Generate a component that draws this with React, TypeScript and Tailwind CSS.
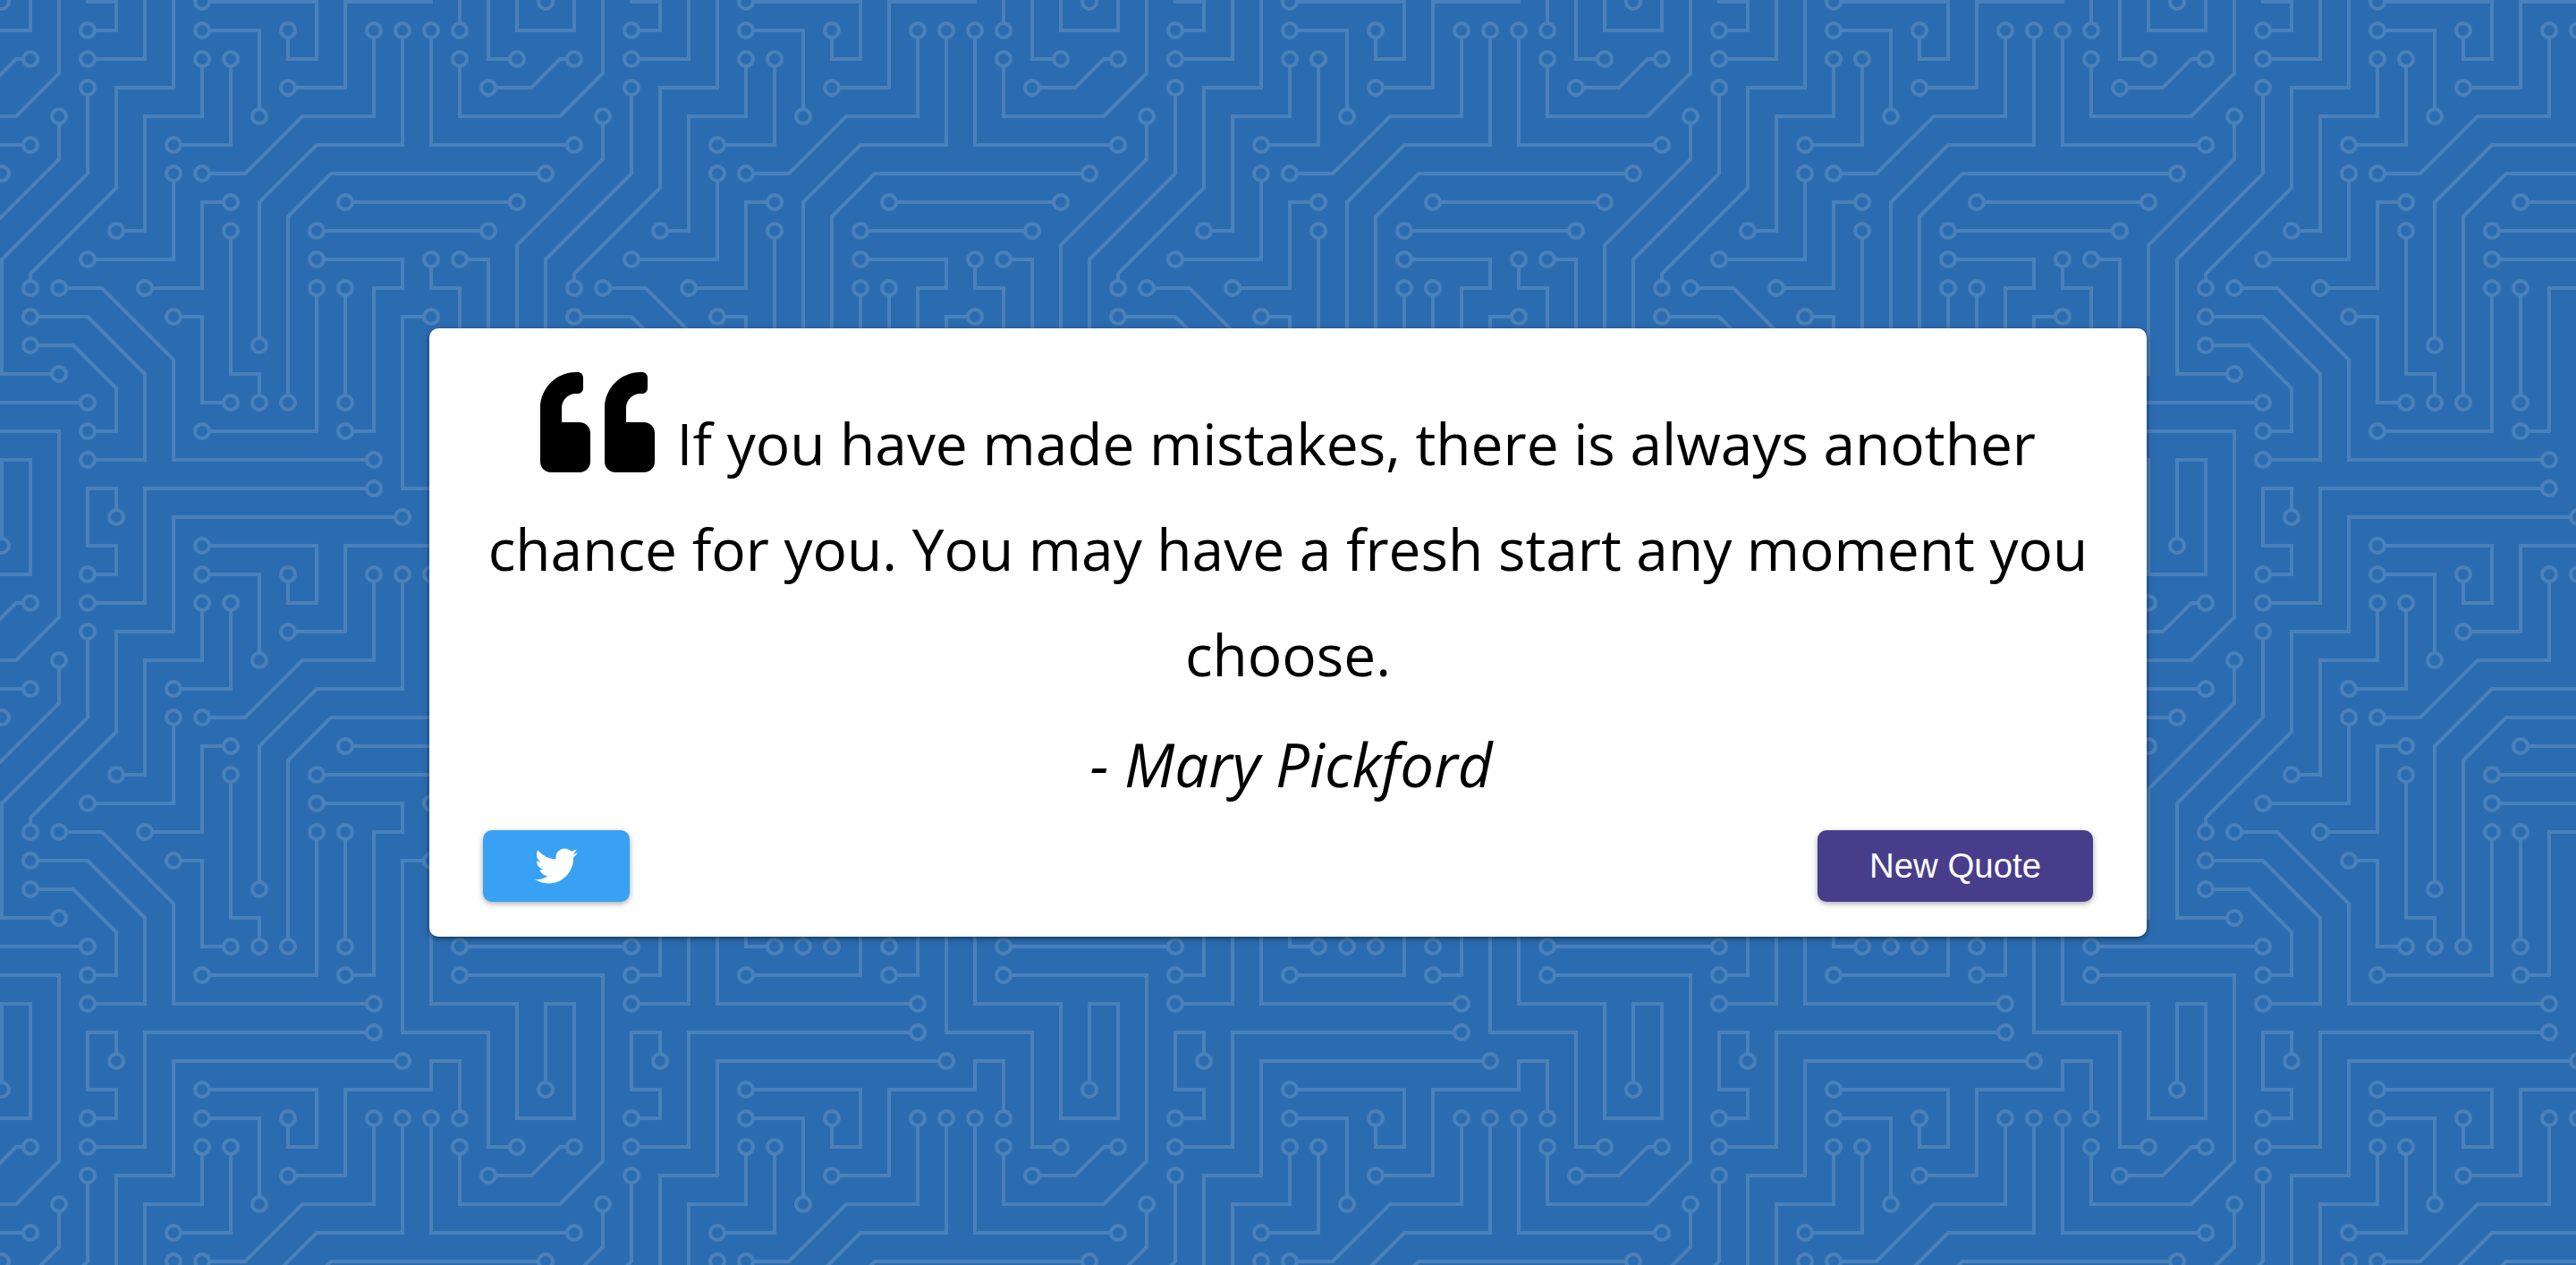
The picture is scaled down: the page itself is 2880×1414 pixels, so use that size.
import { FaQuoteLeft, FaTwitter } from "react-icons/fa";

// circuit board background, traced on a 32px grid (tile = 19 cells)
const CELL = 32;
const TILE = 608;
const LINE = "#4a81ba";
const BG = "#2b6cb0";

type Pt = [number, number];

const traces: { pts: Pt[]; open?: boolean }[] = [
  { pts: [[16, 15], [21, 15], [21, 21.5], [19.5, 23], [16, 23], [16, 21]] },
  { pts: [[15, 11], [14, 11], [14, 17], [17, 17], [17, 21], [18, 21]] },
  { pts: [[19, 19], [19, 16], [20, 16], [20, 20], [18, 20], [18, 16], [15, 16], [15, 13], [18, 13], [18, 8.5], [21, 5.5], [21, 4]] },
  { pts: [[16, 20], [16, 18], [15, 18], [15, 19], [12, 19], [12, 22], [10, 22]] },
  { pts: [[7, 19], [11, 19], [11, 21], [10, 21], [10, 20]] },
  { pts: [[14, 18], [6, 18], [6, 22], [4, 22], [4, 25.5], [1, 28.5], [1, 29]] },
  { pts: [[7, 6], [8.5, 6], [10.5, 4], [13, 4], [13, 1]] },
  { pts: [[14, 1], [14, 5], [11, 5], [9, 7], [9, 12]] },
  { pts: [[15, 1], [15, 5], [20, 5]] },
  { pts: [[17, 3], [18.5, 3], [19.5, 2], [20, 2]] },
  { pts: [[19, 6], [11.5, 6], [10, 7.5], [10, 14]] },
  { pts: [[12, 7], [18, 7]] },
  { pts: [[11, 8], [17, 8]] },
  { pts: [[11, 9], [14, 9], [14, 10], [13, 10], [13, 15], [12, 15]] },
  { pts: [[15, 9], [15, 10], [16, 10], [16, 12]], open: true },
  { pts: [[16, 9], [17, 9], [17, 12]], open: true },
  { pts: [[2, 13], [0, 13], [0, 9], [3, 6], [3, 3]] },
  { pts: [[4, 18], [4, 17], [3, 17], [3, 19], [4, 19], [4, 20], [3, 20]] },
  { pts: [[3, 21], [5, 21], [5, 17], [13, 17]] },
  { pts: [[7, 1], [9, 1], [9, 4]] },
  { pts: [[7, 2], [7, 4], [5, 4], [5, 8], [4, 8]] },
  { pts: [[8, 2], [8, 5], [6, 5]] },
  { pts: [[6, 6], [6, 9], [3, 9]] },
  { pts: [[8, 7], [7, 7], [7, 10], [5, 10]] },
  { pts: [[8, 8], [8, 13], [9, 13], [9, 14]] },
  { pts: [[2, 10], [3.5, 10], [6, 12.5], [6, 16], [13, 16]] },
  { pts: [[1, 11], [3, 11], [5, 13], [5, 16], [3, 16]] },
  { pts: [[1, 12], [2.5, 12], [4, 13.5], [4, 15], [3, 15]] },
  { pts: [[16, 14], [22, 14]] },
  { pts: [[7, 15], [11, 15], [11, 10]] },
  { pts: [[12, 10], [12, 14]] },
  { pts: [[6, 11], [7, 11], [7, 14], [8, 14]] },
];

const px = (n: number) => 2 + CELL * n;

function CircuitTile() {
  return (
    <>
      {traces.map((t, i) => (
        <g key={i}>
          <polyline
            points={t.pts.map(([x, y]) => `${px(x)},${px(y)}`).join(" ")}
            fill="none"
            stroke={LINE}
            strokeWidth={4}
          />
          <circle cx={px(t.pts[0][0])} cy={px(t.pts[0][1])} r={8} fill={BG} stroke={LINE} strokeWidth={4} />
          {!t.open && (
            <circle
              cx={px(t.pts[t.pts.length - 1][0])}
              cy={px(t.pts[t.pts.length - 1][1])}
              r={8}
              fill={BG}
              stroke={LINE}
              strokeWidth={4}
            />
          )}
        </g>
      ))}
    </>
  );
}

function CircuitBackground() {
  const offsets = [-TILE, 0, TILE];
  return (
    <svg className="absolute inset-0 h-full w-full" aria-hidden="true">
      <defs>
        <pattern id="circuit" width={TILE} height={TILE} patternUnits="userSpaceOnUse">
          {offsets.map((dx) =>
            offsets.map((dy) => (
              <g key={`${dx}:${dy}`} transform={`translate(${dx} ${dy})`}>
                <CircuitTile />
              </g>
            ))
          )}
        </pattern>
      </defs>
      <rect width="100%" height="100%" fill="url(#circuit)" />
    </svg>
  );
}

export default function App() {
  return (
    <div className="relative flex h-[1414px] items-center justify-center overflow-hidden bg-[#2b6cb0]">
      <CircuitBackground />

      <div className="relative h-[680px] w-[1920px] rounded-[10px] bg-white px-[60px] pt-[41px] shadow-[0_2px_6px_0_rgba(0,0,0,0.5)]">
        <p className="text-center font-['Open_Sans',sans-serif] text-[64px] leading-[118px] text-black">
          <FaQuoteLeft size={128} className="mr-[8px] inline align-[-16px]" /> If you have made mistakes, there is always another chance for you. You may have a fresh start any moment you choose.
        </p>
        <p className="mt-[4px] pl-[7px] text-center font-['Open_Sans',sans-serif] text-[67.2px] leading-[118px] text-black italic">
          - Mary Pickford
        </p>

        <div className="mt-[15px] flex items-center justify-between">
          <button className="flex h-[80px] w-[164px] items-center justify-center rounded-[10px] bg-[#38a1f3] text-white shadow-[0_2px_6px_0_rgba(0,0,0,0.35)]">
            <FaTwitter size={48} />
          </button>
          <button className="flex h-[80px] w-[308px] items-center justify-center rounded-[10px] bg-[#483d8b] font-['Liberation_Sans',sans-serif] text-[38.4px] text-white shadow-[0_2px_6px_0_rgba(0,0,0,0.35)]">
            New Quote
          </button>
        </div>
      </div>
    </div>
  );
}
